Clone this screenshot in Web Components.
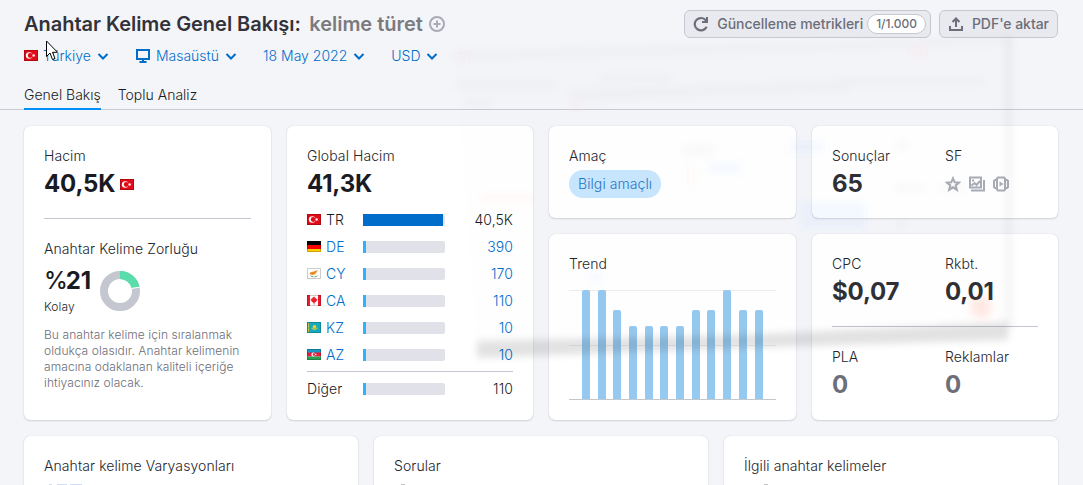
<!DOCTYPE html>
<html lang="tr">
<head>
<meta charset="utf-8">
<title>Anahtar Kelime Genel Bakışı</title>
<style>
  html, body { margin: 0; height: 485px; overflow: hidden; }
  body {
    background: #f4f5f9;
    font: 350 14px/20px Inter, "Liberation Sans", sans-serif;
    color: #24252c;
  }
</style>
</head>
<body>
<keyword-page></keyword-page>

<script>
const define = (name, html, setup) => {
  const template = document.createElement('template');
  template.innerHTML = html;
  customElements.define(name, class extends HTMLElement {
    constructor() {
      super();
      this.attachShadow({mode: 'open'}).appendChild(template.content.cloneNode(true));
    }
    connectedCallback() {
      if (setup) setup(this, this.shadowRoot);
    }
  });
};

const flags = {
  tr: '<path fill="#e30a17" d="M0 0h14v11H0z"/><circle cx="5.2" cy="5.5" r="3.3" fill="#fff"/><circle cx="6.2" cy="5.5" r="2.4" fill="#e30a17"/><path fill="#fff" d="M8 5.5l1.2-.5.1-1.2.8 1 1.2-.3-.7 1 .7 1-1.2-.3-.8 1-.1-1.2z"/>',
  de: '<path d="M0 0h14v4H0z"/><path fill="#f00" d="M0 4h14v4H0z"/><path fill="#fc0" d="M0 8h14v3H0z"/>',
  cy: '<path fill="#fff" d="M0 0h14v11H0z"/><path fill="#ee8a1d" d="M2.5 5l2-1 2.5-.4L11 2 9.5 4.3 8 6.3 5.5 7 3 6.3z"/><path d="M3.5 7.6q1 1.2 3 1.2M7.5 8.9q2 0 3-1.2" stroke="#5aa27a" fill="none"/>',
  ca: '<path fill="#fff" d="M0 0h14v11H0z"/><path fill="#ec1c2c" d="M0 0h3v11H0zM11 0h3v11h-3zM7 1.3l.9 1.5 1-.3-.2 1.7 1.6-.6v1l-1 1.8-1.7 1.3H7.4v1.8h-.8V7.7H6.4L4.7 6.4l-1-1.8v-1l1.6.6-.2-1.7 1 .3z"/>',
  kz: '<path fill="#15aabf" d="M0 0h14v11H0z"/><path fill="#b9c34a" d="M1 1h1v9H1z"/><circle cx="7.5" cy="4.8" r="1.9" fill="#efcf20"/><path d="M4.5 6.3q3 2.6 6 0" stroke="#dccb2e" fill="none"/>',
  az: '<path fill="#1797c2" d="M0 0h14v4H0z"/><path fill="#ed1b3b" d="M0 3.5h14v4H0z"/><path fill="#28a055" d="M0 7.5h14V11H0z"/><circle cx="6.3" cy="5.5" r="1.9" fill="#fff"/><circle cx="7" cy="5.5" r="1.3" fill="#ed1b3b"/><circle cx="8.7" cy="5.5" r=".8" fill="#fff"/>'
};

define('country-flag', `
  <style>
    :host { display: block; flex: none; width: 14px; height: 11px; }
    svg { display: block; }
  </style>
  <svg width="14" height="11" viewBox="0 0 14 11"></svg>`, (host, root) => {
  root.querySelector('svg').innerHTML = flags[host.getAttribute('code')] +
    '<path d="M.5.5h13v10H.5z" fill="none" stroke="#000" stroke-opacity=".2"/>';
});

const icons = {
  plus: '<circle cx="8" cy="8" r="7" stroke-width="2"/><path stroke-width="2" d="M8 4.5v7M4.5 8h7"/>',
  chevron: '<path stroke-width="2" d="M3.5 6l4.5 4.5L12.5 6"/>',
  monitor: '<path stroke-width="2" d="M2 2h12v9H2z"/><path stroke-width="2" d="M8 11v3M4.5 14h7"/>',
  reload: '<path stroke-width="2.2" d="M13.6 10.8A6.2 6.2 0 1 1 12.3 3.8L14 5.3"/><path fill="currentColor" stroke="none" d="M15 1v6H9V5h4V1z"/>',
  upload: '<path stroke-width="2" d="M2 10v4h12v-4M8 11V3M4.5 6L8 2.5 11.5 6"/>',
  star: '<path stroke-width="2" d="M8 2.3l1.7 4 4.3.3-3.3 2.8 1.1 4.3L8 11.3l-3.8 2.4 1.1-4.3L2 6.6l4.3-.3z"/>',
  images: '<path stroke-width="2" d="M1 1.5h11v10H1zM2 14.5h13V4M2.5 9.5l3-2.5 2 2L11 5"/><path fill="currentColor" stroke="none" d="M3 3.5h2v2H3z"/>',
  video: '<path stroke-width="2" d="M5 1.5h6l1 1v11l-1 1H5l-1-1v-11zM4 4H2L1 5v6l1 1h2M12 4h2l1 1v6l-1 1h-2"/><path fill="currentColor" stroke="none" d="M6.5 5.5L10.5 8l-4 2.5z"/>'
};

define('ui-icon', `
  <style>
    :host { display: block; flex: none; width: 16px; height: 16px; }
    svg { display: block; }
  </style>
  <svg width="16" height="16" viewBox="0 0 16 16" fill="none" stroke="currentColor"></svg>`, (host, root) => {
  root.querySelector('svg').innerHTML = icons[host.getAttribute('name')];
});

define('filter-select', `
  <style>
    :host { display: flex; align-items: center; color: #006dca; height: 20px; }
    ::slotted(*) { margin-right: 5px; }
    ::slotted(country-flag) { margin-bottom: 1px; }
    ui-icon { margin-left: 4px; }
  </style>
  <slot name="icon"></slot><slot></slot><ui-icon name="chevron"></ui-icon>`);

define('ui-button', `
  <style>
    :host {
      display: flex; align-items: center; box-sizing: border-box; height: 28px;
      border: 1px solid #c5c7d1; border-radius: 6px; background: #e9eaf0;
      color: #6c6e79; font-weight: 500; letter-spacing: -.03px; padding: 0 8px;
    }
    ui-icon { margin-right: 8px; }
  </style>
  <ui-icon></ui-icon><slot></slot><slot name="badge"></slot>`, (host, root) => {
  const icon = root.querySelector('ui-icon');
  const fresh = document.createElement('ui-icon');
  fresh.setAttribute('name', host.getAttribute('icon'));
  icon.replaceWith(fresh);
});

define('page-header', `
  <style>
    :host { display: block; height: 109px; border-bottom: 1px solid #c9cbd3; padding: 0 24px; letter-spacing: 0; }
    .top { display: flex; justify-content: space-between; padding-top: 10px; height: 28px; }
    h1 { display: flex; align-items: center; margin: 0; font-size: 20px; line-height: 28px; font-weight: 600; letter-spacing: -.03px; color: #32333a; }
    h1 span { color: #7b7b7e; margin-left: 8.5px; }
    h1 ui-icon { color: #a9abb6; margin-left: 6px; }
    .actions { display: flex; gap: 8px; margin-right: 1px; }
    .badge { box-sizing: border-box; height: 20px; border: 1px solid #c5c7d1; border-radius: 10px; background: #fff; font-size: 12px; line-height: 18px; padding: 0 8px; margin: 0 -4px 0 4px; }
    .filters { display: flex; gap: 24px; padding-top: 8px; }
    .tabs { display: flex; gap: 17px; padding-top: 19px; color: #191b23; }
    .tabs span { height: 22px; padding-bottom: 1px; }
    .tabs .active { border-bottom: 2px solid #008ff8; height: 22px; }
  </style>
  <div class="top">
    <h1>Anahtar Kelime Genel Bakışı:<span>kelime türet</span><ui-icon name="plus"></ui-icon></h1>
    <div class="actions">
      <ui-button icon="reload">Güncelleme metrikleri<span slot="badge" class="badge">1/1.000</span></ui-button>
      <ui-button icon="upload">PDF'e aktar</ui-button>
    </div>
  </div>
  <div class="filters">
    <filter-select><country-flag slot="icon" code="tr"></country-flag>Türkiye</filter-select>
    <filter-select><ui-icon slot="icon" name="monitor"></ui-icon>Masaüstü</filter-select>
    <filter-select>18 May 2022</filter-select>
    <filter-select>USD</filter-select>
  </div>
  <div class="tabs"><span class="active">Genel Bakış</span><span>Toplu Analiz</span></div>`);

define('ui-card', `
  <style>
    :host { display: block; box-sizing: border-box; background: #fff; border-radius: 6px; padding: 20px; box-shadow: 0 0 1px rgba(25,27,35,.2), 0 1px 2px rgba(25,27,35,.14); }
  </style>
  <slot></slot>`);

define('metric-value', `
  <style>
    :host { display: block; }
    .value { display: flex; align-items: center; gap: 5px; height: 28px; margin-top: 4px; font-size: 24px; line-height: 28px; font-weight: 700; letter-spacing: -.15px; color: var(--value-color, #191b23); }
  </style>
  <div><slot name="label"></slot></div>
  <div class="value"><slot></slot></div>`);

define('country-row', `
  <style>
    :host { display: grid; grid-template-columns: 56px 82px 1fr; align-items: center; height: 27px; color: #006dca; }
    :host([plain]) { color: #191b23; }
    .name { display: flex; align-items: center; gap: 5px; }
    .bar { height: 12px; border-radius: 0 2px 2px 0; background: #e0e1e9; }
    .fill { height: 12px; background: #2bb3ff; }
    .count { text-align: right; }
  </style>
  <div class="name"></div>
  <div class="bar"><div class="fill"></div></div>
  <div class="count"><slot></slot></div>`, (host, root) => {
  const code = host.getAttribute('code');
  root.querySelector('.name').innerHTML =
    (code ? `<country-flag code="${code}"></country-flag>` : '') + `<span>${host.getAttribute('name')}</span>`;
  const full = code === 'tr';
  root.querySelector('.fill').style.cssText = `width: ${full ? 80 : 3}px;` + (full ? 'background: #006dca' : '');
});

define('trend-chart', `
  <style>
    :host { display: block; margin-top: 16px; height: 110px; }
    svg { display: block; }
  </style>
  <svg width="207" height="110" viewBox="0 0 207 110"></svg>`, (host, root) => {
  // [x, top] of each month
  const months = [[13, 0], [29, 0], [44, 20], [60, 36], [76, 36], [91, 36], [107, 36], [123, 20], [138, 20], [154, 0], [170, 20], [186, 20]];
  root.querySelector('svg').innerHTML =
    '<path d="M0 .5h207M0 55.5h207" stroke="#ecedf0"/>' +
    months.map(([x, y]) => `<path fill="#96c9ef" d="M${x} 109V${y + 2}q0-2 2-2h4q2 0 2 2V109z"/>`).join('') +
    '<path d="M0 109.5h207" stroke="#c4c7cf"/>';
});

// Faded window that is sliding away over the dashboard
define('window-trail', `
  <style>
    :host { display: block; position: absolute; left: 0; top: 0; pointer-events: none; }
    svg { display: block; }
  </style>
  <svg width="1083" height="485" viewBox="0 0 1083 485">
    <defs>
      <filter id="soft" x="-20%" y="-100%" width="140%" height="300%"><feGaussianBlur stdDeviation="3.5"/></filter>
    </defs>
    <g filter="url(#soft)">
      <path fill="#222" fill-opacity=".004" d="M455 55L1008 38V330L477 350z"/>
      <path fill="#222" fill-opacity=".115" d="M477 341L740 335 1008 322V340L740 348 477 358z"/>
      <path fill="#222" fill-opacity=".035" d="M1004 36h9v294h-9z"/>
      <path fill="#222" fill-opacity=".018" d="M455 50L740 43 1010 36V45L740 54 455 61zM570 88l280-8v12l-280 10zM455 80h100v10H455zM600 74h72v8h-72zM465 98h28v8h-28zM835 77h150v9H835z"/>
      <path fill="#222" fill-opacity=".025" d="M684 144h30v12h-30zM896 140h12v10h-12zM896 183h26v10h-26zM942 183h22v10h-22zM896 220h10v8h-10z"/>
      <path fill="#4a90ff" fill-opacity=".06" d="M709 163h32v10h-32zM790 142h34v10h-34zM800 202h66v26h-66zM590 272h12v10h-12z"/>
      <path fill="#f65" fill-opacity=".04" d="M456 54h12v8h-12zM570 102h12v8h-12zM688 166h6v20h-6zM910 48h16v10h-16zM480 196h54v5h-54z"/>
      <circle cx="981" cy="307" r="11" fill="#ff5530" fill-opacity=".13"/>
    </g>
  </svg>`);

define('mouse-pointer', `
  <style>
    :host { display: block; position: absolute; left: 46px; top: 40px; }
    svg { display: block; }
  </style>
  <svg width="13" height="21" viewBox="0 0 13 21"><path fill="#fff" stroke="#000" d="M.5 1v15.5L4 13l2.5 6.5 2.5-1L6.5 12.3h5z"/></svg>`);

define('keyword-page', `
  <style>
    :host { display: block; height: 485px; overflow: hidden; position: relative; letter-spacing: .08px; }
    .grid { display: grid; grid-template-columns: 247px 246px 247px 246px; gap: 16px; padding: 16px 24px; }
    .grid > ui-card { height: 294px; }
    .stack { display: flex; flex-direction: column; gap: 16px; }
    .stack ui-card:first-child { height: 92px; }
    .stack ui-card:last-child { height: 186px; }
    .bottom { display: grid; grid-template-columns: repeat(3, 1fr); gap: 16px; padding: 0 25px 0 24px; }
    .bottom ui-card { height: 90px; }
    .bottom svg { display: block; margin-top: 8px; }
    hr { border: 0; height: 1px; background: #c4c7cf; margin: 20px 0; }
    .difficulty { display: flex; gap: 9px; margin: 10px 0 12px; }
    .difficulty > div { width: 47px; }
    .difficulty b { display: block; font-size: 24px; line-height: 24px; color: #191b23; letter-spacing: -.2px; }
    .difficulty b span { font-weight: 500; letter-spacing: -2px; }
    .difficulty small { display: block; font-size: 12px; line-height: 16px; margin-top: 6px; }
    .difficulty svg { margin-top: 2px; }
    p { margin: 0; font-size: 12px; line-height: 16px; color: #6c6e79; white-space: nowrap; }
    .rows { margin-top: 8px; }
    .rows hr { margin: 3px 0; }
    .pill { display: inline-block; height: 28px; line-height: 27px; border-radius: 14px; margin-top: 4px; padding: 0 9px; background: #c8e6fe; color: #2477c9; }
    .pair { display: grid; grid-template-columns: 113px 1fr; }
    .muted { --value-color: #6c6e79; }
    .soft { --value-color: #2e3036; }
    .features { display: flex; gap: 8px; color: #a9abb6; }
  </style>
  <page-header></page-header>
  <div class="grid">
    <ui-card>
      <metric-value><span slot="label">Hacim</span>40,5K<country-flag code="tr"></country-flag></metric-value>
      <hr>
      <div>Anahtar Kelime Zorluğu</div>
      <div class="difficulty">
        <div><b><span>%</span>21</b><small>Kolay</small></div>
        <svg width="40" height="40" viewBox="0 0 40 40" fill="none" stroke-width="8">
          <circle cx="20" cy="20" r="16" stroke="#c4c7cf"/>
          <path d="M20 4A16 16 0 0 1 35.6 16.5" stroke="#59ddaa"/>
          <path d="M31.5 17.4L40 16.2" stroke="#fff" stroke-width="1"/>
        </svg>
      </div>
      <p>Bu anahtar kelime için sıralanmak<br>oldukça olasıdır. Anahtar kelimenin<br>amacına odaklanan kaliteli içeriğe<br>ihtiyacınız olacak.</p>
    </ui-card>
    <ui-card>
      <metric-value><span slot="label">Global Hacim</span>41,3K</metric-value>
      <div class="rows">
        <country-row plain code="tr" name="TR">40,5K</country-row>
        <country-row code="de" name="DE">390</country-row>
        <country-row code="cy" name="CY">170</country-row>
        <country-row code="ca" name="CA">110</country-row>
        <country-row code="kz" name="KZ">10</country-row>
        <country-row code="az" name="AZ">10</country-row>
        <hr>
        <country-row plain name="Diğer">110</country-row>
      </div>
    </ui-card>
    <div class="stack">
      <ui-card><div>Amaç</div><span class="pill">Bilgi amaçlı</span></ui-card>
      <ui-card><div>Trend</div><trend-chart></trend-chart></ui-card>
    </div>
    <div class="stack">
      <ui-card>
        <div class="pair soft">
          <metric-value><span slot="label">Sonuçlar</span>65</metric-value>
          <metric-value><span slot="label">SF</span><div class="features"><ui-icon name="star"></ui-icon><ui-icon name="images"></ui-icon><ui-icon name="video"></ui-icon></div></metric-value>
        </div>
      </ui-card>
      <ui-card>
        <div class="pair soft">
          <metric-value><span slot="label">CPC</span>$0,07</metric-value>
          <metric-value><span slot="label">Rkbt.</span>0,01</metric-value>
        </div>
        <hr>
        <div class="pair muted">
          <metric-value><span slot="label">PLA</span>0</metric-value>
          <metric-value><span slot="label">Reklamlar</span>0</metric-value>
        </div>
      </ui-card>
    </div>
  </div>
  <div class="bottom">
    <ui-card>Anahtar kelime Varyasyonları<svg width="60" height="1"><path d="M5 .5h3M13 .5h10M26 .5h12" stroke="#d3ddf8"/></svg></ui-card>
    <ui-card>Sorular<svg width="60" height="1"><path d="M7 .5h4" stroke="#c0c2c8"/></svg></ui-card>
    <ui-card>İlgili anahtar kelimeler<svg width="60" height="1"><path d="M20 .5h4" stroke="#c0c2c8"/></svg></ui-card>
  </div>
  <window-trail></window-trail>
  <mouse-pointer></mouse-pointer>`);
</script>
</body>
</html>
